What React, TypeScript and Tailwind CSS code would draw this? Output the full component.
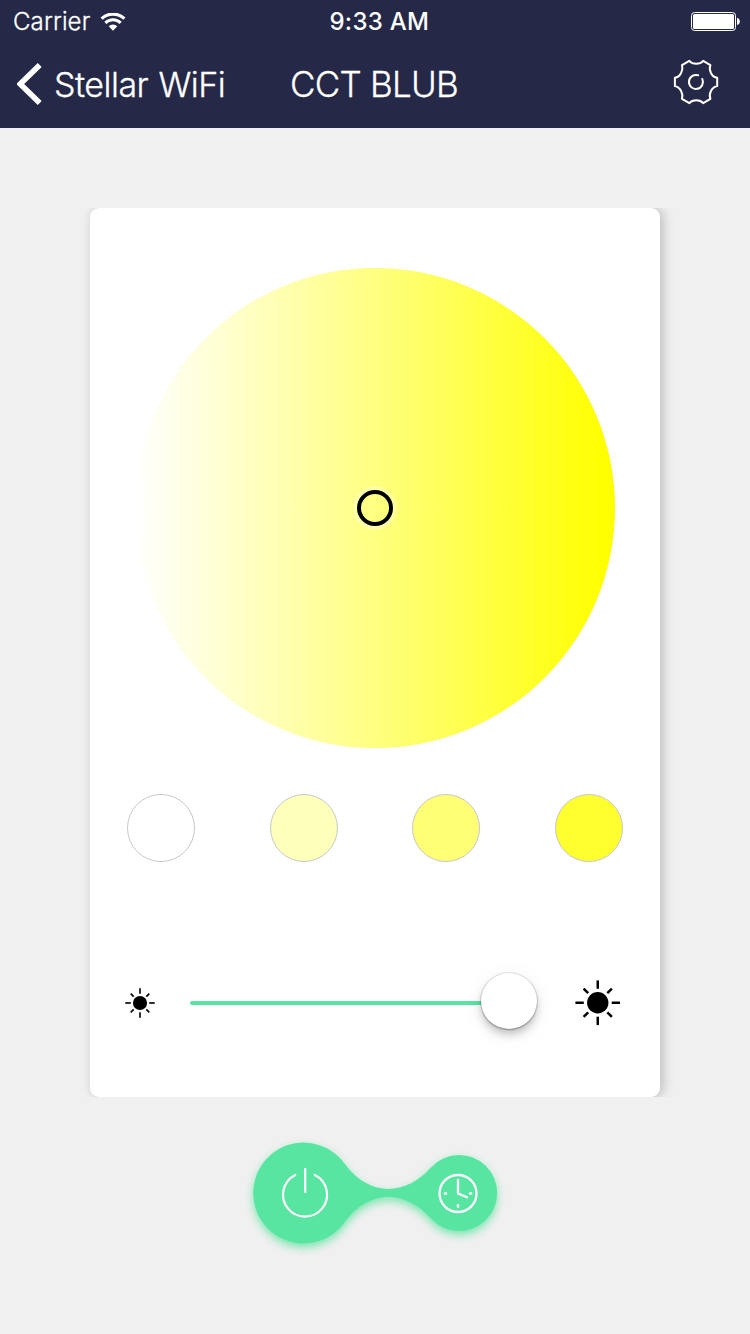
import React from "react";

function WifiIcon() {
  return (
    <svg className="ml-[10px] h-[18px] w-[26px]" viewBox="0 0 26 18" fill="none" stroke="white">
      <path d="M1.6 5.6 A16.6 16.6 0 0 1 24.4 5.6" strokeWidth="3.2" />
      <path d="M5.3 9.9 A10.9 10.9 0 0 1 20.7 9.9" strokeWidth="2.9" />
      <path d="M8.7 13.3 A6.2 6.2 0 0 1 17.3 13.3 L13 17.7 Z" fill="white" stroke="none" />
    </svg>
  );
}

function BatteryIcon() {
  return (
    <svg className="h-5 w-[50px]" viewBox="0 0 50 20">
      <rect x="0.5" y="0.5" width="44" height="18" rx="3" fill="none" stroke="white" />
      <rect x="2" y="2" width="41" height="15" rx="1.5" fill="white" />
      <path d="M46 6 C49.8 6.3 49.8 12.7 46 13 Z" fill="white" />
    </svg>
  );
}

function GearIcon() {
  return (
    <svg
      className="h-[46px] w-[46px]"
      viewBox="0 0 46 46"
      fill="none"
      stroke="white"
      strokeWidth="2"
      strokeLinecap="round"
      strokeLinejoin="round"
    >
      <path d="M16.3 1.8 C19.5 5.7 27 5.7 30.2 1.8 L37.4 6.2 C35.5 11 38.5 17.8 44.2 18.8 V27 C38.5 28.2 35.5 35 37.4 39.8 L30.2 44.2 C27 40.3 19.5 40.3 16.3 44.2 L9 39.8 C10.5 35 7.5 28.2 1.9 27 V18.8 C7.5 17.8 10.5 11 9 6.2 Z" />
      <path d="M25.2 16.3 A7 7 0 1 0 29.3 20" />
    </svg>
  );
}

function SunIcon({ className }: { className: string }) {
  const angles = [0, 45, 90, 135, 180, 225, 270, 315];
  return (
    <svg className={className} viewBox="0 0 46 46">
      <circle cx="23" cy="23" r="10.8" />
      {angles.map((a) => (
        <path
          key={a}
          d={a % 90 === 0 ? "M23 0.4 V8.9" : "M23 2.8 V9.3"}
          stroke="black"
          strokeWidth="2.5"
          transform={`rotate(${a} 23 23)`}
        />
      ))}
    </svg>
  );
}

function Controls() {
  return (
    <svg className="mx-auto mt-[33px] h-[140px] w-[270px]" viewBox="240 1130 270 140" fill="none">
      <path
        className="drop-shadow-[0_4px_4px_rgba(60,225,140,0.65)]"
        fill="#58e5a1"
        d="M345.2 1164.5 C369 1196.5 405 1196.5 431 1167.5 A38 38 0 1 1 431 1218.5 C405 1189.5 369 1189.5 345.2 1221.5 A50.4 50.4 0 1 1 345.2 1164.5 Z"
      />
      <g stroke="white" strokeLinecap="round">
        <path d="M295.3 1174.9 A22 22 0 1 0 314.8 1174.9" strokeWidth="2.2" />
        <path d="M305.2 1168.8 V1192" strokeWidth="2.2" />
        <circle cx="458" cy="1193.5" r="18.5" strokeWidth="2.3" />
        <path d="M458 1180 V1193.5 L467 1197.3" strokeWidth="2.3" strokeLinejoin="round" />
        <path d="M444.9 1193.5 H446 M470 1193.5 H471.1 M458 1205.3 V1206.6" strokeWidth="2.6" />
      </g>
    </svg>
  );
}

export default function App() {
  return (
    <div className="h-[1334px] w-[750px] overflow-hidden bg-[#f0f0f0] font-['Inter',sans-serif]">
      <header className="h-32 bg-[#252947] text-white">
        <div className="grid h-10 grid-cols-3 pt-0.5">
          <div className="flex items-center pl-[13px]">
            <span className="text-[24px] leading-10 font-light tracking-[0.12px] [-webkit-text-stroke:0.3px_white]">Carrier</span>
            <WifiIcon />
          </div>
          <span className="pl-[79.5px] text-[24px] leading-10 font-medium tracking-[0.25px] whitespace-nowrap">9:33 AM</span>
          <div className="flex items-center justify-end pr-[9px]">
            <BatteryIcon />
          </div>
        </div>
        <nav className="flex h-[88px] items-center">
          <button className="ml-[17px] flex w-[273px] items-center">
            <svg className="h-[42px] w-[26px]" viewBox="0 0 26 42">
              <path d="M22.7 2 L3.2 21 L22.7 40" fill="none" stroke="white" strokeWidth="5.6" />
            </svg>
            <span className="mt-px ml-[11px] text-[34px] leading-10 font-light tracking-[-0.5px] word-spacing-normal whitespace-nowrap [-webkit-text-stroke:0.3px_white] [word-spacing:1px]">Stellar WiFi</span>
          </button>
          <h1 className="-mt-px w-[383px] text-[35px] leading-10 font-light tracking-[-0.75px] whitespace-nowrap [-webkit-text-stroke:0.3px_white]">CCT BLUB</h1>
          <button className="-mt-1">
            <GearIcon />
          </button>
        </nav>
      </header>
      <main>
        <div className="mt-20 h-[889px] overflow-hidden px-[90px]">
          <section className="flex h-full flex-col rounded-[9px] bg-white px-[35px] pt-[60px] shadow-[3px_0_12px_rgba(0,0,0,0.22)]">
            <div className="mx-auto flex h-[480px] w-[480px] items-center justify-center rounded-full bg-[linear-gradient(to_right,#ffffff_0%,#ffff80_50%,#ffff00_98%)]">
              <div className="h-9 w-9 rounded-full border-4 border-black shadow-[0_0_0_4px_rgba(255,255,255,0.3)]" />
            </div>
            <div className="mt-[46px] flex justify-between px-0.5">
              <div className="h-[68px] w-[68px] rounded-full border border-[#c8c8c8] bg-white" />
              <div className="h-[68px] w-[68px] rounded-full border border-[#c8c8c8] bg-[#ffffbc]" />
              <div className="h-[68px] w-[68px] rounded-full border border-[#c8c8c8] bg-[#ffff75]" />
              <div className="h-[68px] w-[68px] rounded-full border border-[#c8c8c8] bg-[#ffff30]" />
            </div>
            <div className="mt-[111px] flex h-[60px] items-center">
              <SunIcon className="h-[30px] w-[30px]" />
              <div className="ml-[35px] flex w-[347px] items-center">
                <div className="h-1 w-[291px] rounded-l-full bg-[#58e5a1]" />
                <div className="-mt-1 h-14 w-14 rounded-full bg-white shadow-[0_0_0_1px_rgba(0,0,0,0.08),0_1px_2px_rgba(0,0,0,0.3),0_6px_8px_rgba(0,0,0,0.2),0_4px_24px_rgba(0,0,0,0.06)]" />
              </div>
              <SunIcon className="ml-[37.5px] h-[45.5px] w-[45.5px] shrink-0" />
            </div>
          </section>
        </div>
        <Controls />
      </main>
    </div>
  );
}
